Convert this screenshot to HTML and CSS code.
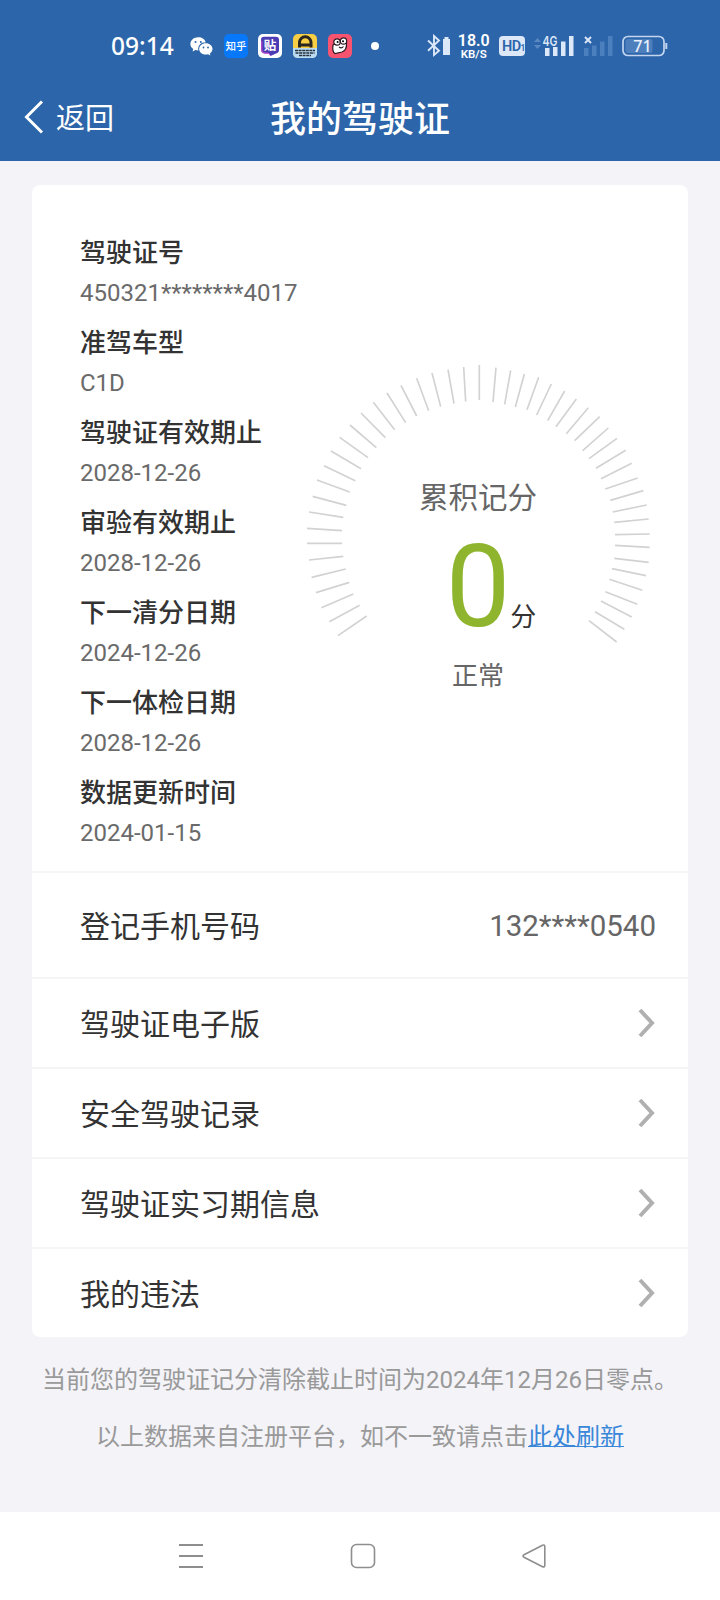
FILE: index.html
```html
<!DOCTYPE html>
<html lang="zh-CN">
<head>
<meta charset="utf-8">
<title>我的驾驶证</title>
<link rel="stylesheet" href="styles.css">
</head>
<body>
<div class="screen">
  <header class="header">
    <div class="status">
      <span class="clock">09:14</span>
      <div class="status-apps">
        <svg class="icon-wechat" width="23" height="19" viewBox="0 0 23 19">
          <path fill="#fff" d="M8.200.3C3.800.3.4 3.200.4 6.900c0 2.100 1.100 3.900 2.900 5.100L2.500 14.500l3-1.500c.9.300 1.900.4 2.900.4C7.400 8.700 11 5.300 15.800 5.300 15 2.300 12 .3 8.200.3z"/>
          <path fill="#fff" d="M22.500 11.900c0-3.100-3-5.600-6.700-5.600s-6.600 2.500-6.600 5.600 3 5.600 6.600 5.600c.8 0 1.500-.1 2.200-.3l2.400 1.300-.6-2.100c1.600-1 2.700-2.600 2.700-4.500z"/>
          <g fill="#2c65a9"><circle cx="5.500" cy="5" r="1"/><circle cx="10.800" cy="5" r="1"/><circle cx="13.500" cy="10.500" r=".9"/><circle cx="18" cy="10.500" r=".9"/></g>
        </svg>
        <svg width="24" height="24" viewBox="0 0 24 24">
          <rect width="24" height="24" rx="5" fill="#0878fa"/>
          <text class="svg-cjk svg-cjk-medium" x="12" y="15.800" font-size="10.500" text-anchor="middle" fill="#fff">知乎</text>
        </svg>
        <svg width="24" height="24" viewBox="0 0 24 24">
          <rect width="24" height="24" rx="5" fill="#fff"/>
          <path d="M6 2.800h12q3 0 3 3v10q0 3.200-3 3.700L12.500 22l-2-2.500H7q-4 0-4-3.700V6q0-3.200 3-3.200z" fill="#4b3db4"/>
          <path d="M3.800 7v9q0 3.200 3.200 3.200h3.500l2 2.400" fill="none" stroke="#d84bd0" stroke-width="1"/>
          <text class="svg-cjk" x="12" y="15.700" font-size="12.500" text-anchor="middle" fill="#fff">贴</text>
        </svg>
        <svg width="24" height="24" viewBox="0 0 24 24">
          <rect width="24" height="24" rx="5" fill="#f8ce45"/>
          <path d="M0 14h24v5q0 5-5 5H5q-5 0-5-5z" fill="#b9dcf4"/>
          <path d="M6.500 13.500V8.500a5.700 5.700 0 0 1 11.500 0v5" fill="none" stroke="#29271f" stroke-width="3"/>
          <path d="M7 9.500h10.500v3H7z" fill="#29271f"/>
          <path d="M2 16.500h20M2.500 19h19M6 21.500h12" stroke="#29313b" stroke-width="1.700" stroke-dasharray="3 .6"/>
        </svg>
        <svg width="24" height="24" viewBox="0 0 24 24">
          <rect width="24" height="24" rx="5" fill="#f9546f"/>
          <path d="M5 11Q4 18 7 19.500l7-1.500q5-2 4.500-8.500L12 8z" fill="#fff" stroke="#2e1720" stroke-width="1.200"/>
          <circle cx="9" cy="8" r="3.200" fill="#fff" stroke="#2e1720" stroke-width="1.200"/>
          <circle cx="15.500" cy="7" r="3.200" fill="#fff" stroke="#2e1720" stroke-width="1.200"/>
          <circle cx="9.600" cy="8" r="1"/><circle cx="15" cy="7.200" r="1"/>
          <path d="M11 13q2.500 2 4.500-.5" fill="none" stroke="#2e1720" stroke-width="1.100"/>
        </svg>
      </div>
      <i class="status-dot"></i>
      <svg class="icon-bt" width="24" height="24" viewBox="0 0 24 24">
        <path d="M1 6.500l11 10.300-5 4.200V2l5 4.500L1 16.800" fill="none" stroke="#dce7f8" stroke-width="1.900"/>
        <path d="M17.500 3h4v2h1.500v16h-7V5h1.500z" fill="#dce7f8"/>
      </svg>
      <div class="speed"><b>18.0</b><span>KB/S</span></div>
      <svg class="icon-hd" width="26" height="20" viewBox="0 0 26 20">
        <rect width="26" height="20" rx="4" fill="#dce7f8"/>
        <text class="svg-hd" x="3" y="15.200" font-size="14.500" fill="#2c65a9">HD<tspan font-size="8.500">1</tspan></text>
      </svg>
      <svg class="icon-4g" width="42" height="24" viewBox="0 0 42 24">
        <path d="M1 8l3.500-4L8 8zM1 11l3.500 4L8 11z" fill="#5b89c3"/>
        <path d="M12 14h4.500v8H12zM20 13h4.500v9H20zM28 7.500h4.500V22H28zM36 2h4.500v20H36z" fill="#dce7f8"/>
        <text class="svg-latin" x="9.500" y="11.500" font-size="13.500" textLength="15" lengthAdjust="spacingAndGlyphs" fill="#dce7f8">4G</text>
      </svg>
      <svg class="icon-nosim" width="30" height="24" viewBox="0 0 30 24">
        <path d="M1 3l6 6M7 3l-6 6" stroke="#dce7f8" stroke-width="1.900"/>
        <path d="M0 14h4.500v8H0zM8 11.500h4.500V22H8zM16 7.500h4.500V22H16zM24 2h4.500v20H24z" fill="#4c7fbe"/>
      </svg>
      <svg class="icon-battery" width="46" height="22" viewBox="0 0 46 22">
        <rect x="1" y="1.500" width="41" height="19" rx="5" fill="none" stroke="#c4d6ef" stroke-width="1.700"/>
        <rect x="3.500" y="4" width="27" height="14" rx="2.500" fill="#4e7fbd"/>
        <path d="M44.300 8v6" stroke="#c4d6ef" stroke-width="2"/>
        <text class="svg-battery" x="20.500" y="16.500" font-size="16" text-anchor="middle" fill="#e6effb">71</text>
      </svg>
    </div>
    <nav class="navbar">
      <a class="back">
        <svg width="20" height="34" viewBox="0 0 20 34"><path d="M18 1.500L2.500 17 18 32.500" fill="none" stroke="#fff" stroke-width="3"/></svg>
        <span>返回</span>
      </a>
      <h1 class="title">我的驾驶证</h1>
    </nav>
  </header>

  <main class="content">
    <section class="card">
      <div class="summary">
        <dl class="info">
          <dt>驾驶证号</dt><dd>450321********4017</dd>
          <dt>准驾车型</dt><dd>C1D</dd>
          <dt>驾驶证有效期止</dt><dd>2028-12-26</dd>
          <dt>审验有效期止</dt><dd>2028-12-26</dd>
          <dt>下一清分日期</dt><dd>2024-12-26</dd>
          <dt>下一体检日期</dt><dd>2028-12-26</dd>
          <dt>数据更新时间</dt><dd>2024-01-15</dd>
        </dl>
        <div class="gauge">
          <svg class="gauge-ticks" width="344" height="279" viewBox="51 42 1032 837">
            <path fill="none" stroke="#d2d2d2" stroke-width="5" d="M568 45V150M521 51L527 154M474 59L492 161M426 69L452 170M380 85L416 182M333 106L380 198M291 129L347 218M250 157L314 239M213 189L286 263M180 225L259 293M149 262L234 323M123 303L213 356M102 347L196 392M81 390L179 426M68 439L169 466M57 486L160 502M51 535L156 542M51 580H156M57 630L160 619M65 682L167 657M78 728L178 697M94 773L190 732M118 815L209 766M144 857L230 798M618 53L609 156M662 61L644 163M703 72L676 171M746 82L711 179M784 102L740 195M824 123L773 212M859 147L798 230M895 173L829 251M929 200L854 272M955 234L878 302M981 265L897 326M1007 301L918 355M1025 340L933 386M1043 384L946 417M1060 422L961 451M1070 465L968 486M1076 507L973 517M1079 552L975 554M1079 592L975 586M1076 637L973 625M1068 677L966 656M1057 721L958 688M1042 763L946 725M1025 801L933 753M1003 838L915 785M980 876L897 812"/>
          </svg>
          <div class="gauge-text">
            <div class="gauge-title">累积记分</div>
            <div class="gauge-score"><strong>0</strong><span>分</span></div>
            <div class="gauge-state">正常</div>
          </div>
        </div>
      </div>
      <div class="row row-phone"><span>登记手机号码</span><span class="phone">132****0540</span></div>
      <div class="row"><span>驾驶证电子版</span><svg class="chevron" viewBox="0 0 17 30"><path d="M2 2L14 15 2 28"/></svg></div>
      <div class="row"><span>安全驾驶记录</span><svg class="chevron" viewBox="0 0 17 30"><path d="M2 2L14 15 2 28"/></svg></div>
      <div class="row"><span>驾驶证实习期信息</span><svg class="chevron" viewBox="0 0 17 30"><path d="M2 2L14 15 2 28"/></svg></div>
      <div class="row"><span>我的违法</span><svg class="chevron" viewBox="0 0 17 30"><path d="M2 2L14 15 2 28"/></svg></div>
    </section>
    <p class="note">当前您的驾驶证记分清除截止时间为2024年12月26日零点。</p>
    <p class="note">以上数据来自注册平台，如不一致请点击<a class="link">此处刷新</a></p>
  </main>

  <footer class="sysbar">
    <svg width="26" height="26" viewBox="0 0 26 26"><path d="M1 2h24M1 13h24M1 24h24" stroke="#8e8e8e" stroke-width="2"/></svg>
    <svg width="26" height="26" viewBox="0 0 26 26"><rect x="1.500" y="1.500" width="23" height="23" rx="5" fill="none" stroke="#8e8e8e" stroke-width="1.600"/></svg>
    <svg width="26" height="26" viewBox="0 0 26 26"><path d="M21.500 2.200L3 11.800q-2 1.200 0 2.400L21.500 23.700q2.300.8 2.300-1.500V3.700q0-2.300-2.300-1.500z" fill="none" stroke="#8e8e8e" stroke-width="1.600"/></svg>
  </footer>
</div>
</body>
</html>
```
FILE: styles.css
```css
* { box-sizing: border-box; }

body {
  margin: 0;
  font-family: Roboto, "Noto Sans CJK SC", sans-serif;
  color: #333;
  background: #f3f3f8;
}

.screen {
  display: flex;
  flex-direction: column;
  width: 720px;
  height: 1600px;
  overflow: hidden;
}

.header {
  height: 161px;
  background: #2c65a9;
  color: #fff;
}

.status {
  display: flex;
  align-items: center;
  height: 76px;
  padding: 16px 0 0 111px;
}

.status svg { flex: none; }

.clock {
  width: 79px;
  font: 500 24.500px/30px "Noto Sans", sans-serif;
  white-space: nowrap;
}

.status-apps {
  display: flex;
  align-items: center;
  gap: 10.700px;
}

.status-dot {
  width: 8px;
  height: 8px;
  margin: 0 48px 0 19px;
  border-radius: 50%;
  background: #fff;
}

.speed {
  display: flex;
  flex-direction: column;
  align-items: center;
  width: 34px;
  margin: 1px 8px 0 6px;
  font: 600 11.500px/12px Roboto, sans-serif;
}

.speed b {
  font-size: 16px;
  font-weight: 600;
  line-height: 14px;
}

.icon-4g { margin-left: 8px; }
.icon-nosim { margin-left: 9px; }
.icon-battery { margin-left: 8px; }

.svg-cjk { font-family: "Noto Sans CJK SC", sans-serif; font-weight: 700; }
.svg-cjk-medium { font-weight: 500; }
.svg-latin { font-family: Inter, sans-serif; font-weight: 600; }
.svg-hd { font-family: Roboto, sans-serif; font-weight: 600; letter-spacing: -.6px; }
.svg-battery { font-family: "Noto Sans", sans-serif; font-weight: 500; }

.navbar {
  display: grid;
  grid-template-columns: 1fr auto 1fr;
  align-items: center;
  height: 85px;
}

.back {
  display: flex;
  align-items: center;
  gap: 12px;
  padding: 0 0 3px 24px;
  font-size: 29px;
}

.back span { margin-top: -3px; }

.title {
  margin: 2px 0 0;
  font-size: 36px;
  font-weight: 500;
  line-height: 50px;
}

.content {
  flex: 1;
  padding: 24px 32px 0;
}

.card {
  height: 1152px;
  margin-bottom: 23px;
  border-radius: 8px;
  background: #fff;
}

.summary {
  display: flex;
  height: 686px;
  padding: 48px 0 0 48px;
}

.info {
  flex: none;
  width: 227px;
  margin: 0;
}

.info dt {
  font-size: 26px;
  font-weight: 500;
  line-height: 40px;
}

.info dd {
  margin: 0 0 10px;
  color: #6a6a6a;
  font-size: 24px;
  line-height: 40px;
}

.gauge {
  display: grid;
  width: 344px;
  height: 350px;
  margin-top: 131px;
}

.gauge-ticks,
.gauge-text { grid-area: 1 / 1; }

.gauge-text {
  display: flex;
  flex-direction: column;
  align-items: center;
  padding: 114px 2px 0 0;
  color: #666;
}

.gauge-title {
  font-size: 29.500px;
  line-height: 40px;
}

.gauge-score {
  display: flex;
  align-items: baseline;
  height: 138px;
  margin-left: 26px;
  color: #333;
  font-size: 26px;
  line-height: 138px;
}

.gauge-score strong {
  color: #8fb52e;
  font-size: 115px;
  font-weight: 400;
}

.gauge-state {
  font-size: 26px;
  line-height: 40px;
}

.row {
  display: flex;
  align-items: center;
  justify-content: space-between;
  height: 90px;
  padding: 0 32px 0 48px;
  border-top: 2px solid #f5f5f7;
  font-size: 30px;
}

.row > span:first-child { margin-top: -2px; }

.row-phone { height: 106px; }

.phone {
  padding-top: 1px;
  color: #666;
  font-size: 29.500px;
}

.chevron {
  width: 17px;
  height: 30px;
  margin-right: 1px;
  fill: none;
  stroke: #b0b0b0;
  stroke-width: 4;
}

.note {
  margin: 0 0 17px;
  color: #999;
  font-size: 24px;
  line-height: 40px;
  text-align: center;
  white-space: nowrap;
}

.link {
  color: #3a87d8;
  text-decoration: underline;
  text-decoration-thickness: 1px;
}

.sysbar {
  display: flex;
  justify-content: space-between;
  height: 88px;
  padding: 31px 173px 0 178px;
  background: #fff;
}
```
